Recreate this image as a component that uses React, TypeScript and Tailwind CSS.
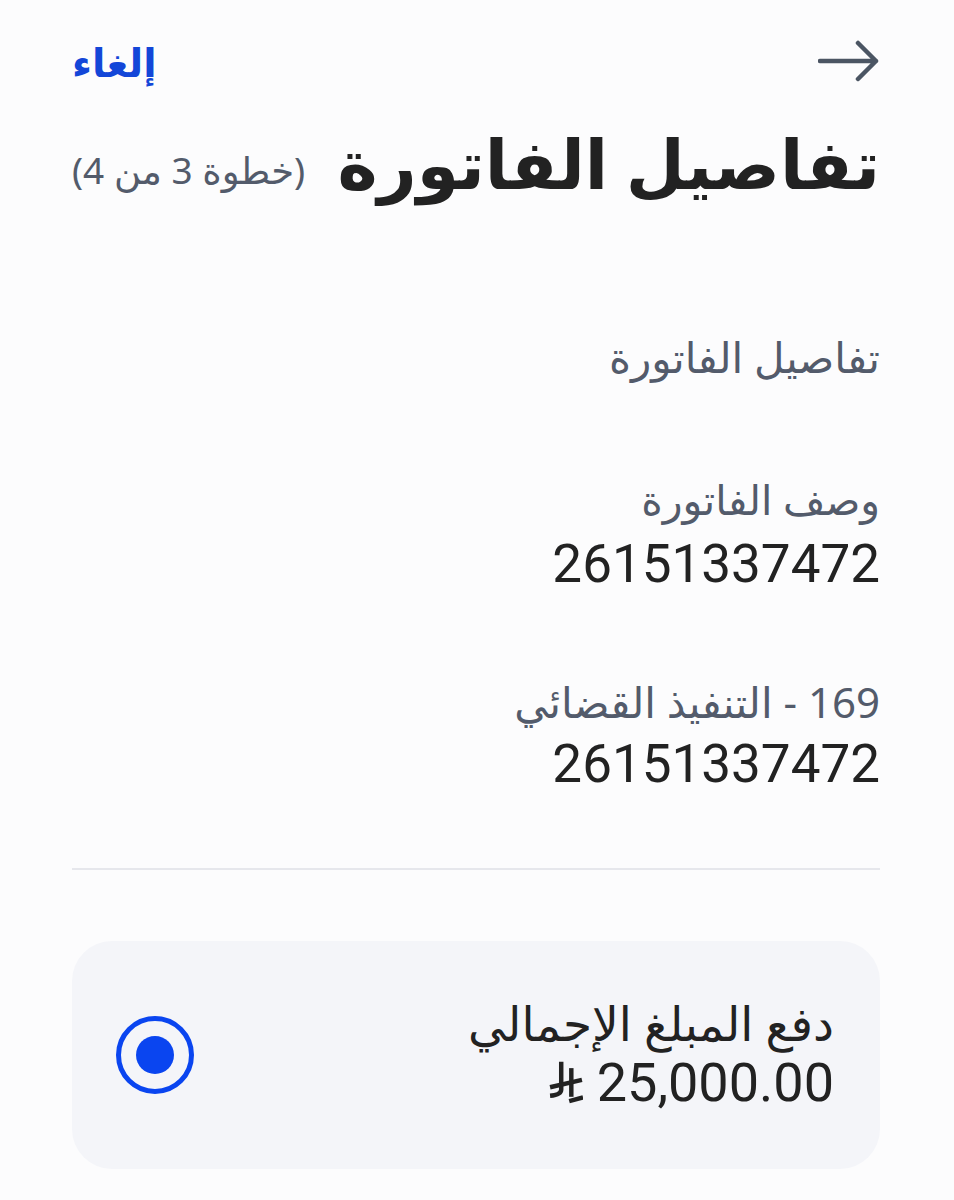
import React from "react";

function Riyal() {
  return (
    <svg width="34" height="44" viewBox="0 0 32 40" fill="none" className="shrink-0">
      <path d="M11.5 0 V26 Q11.5 31 1 32" stroke="#222" strokeWidth="4.2" />
      <path d="M21 6 V33" stroke="#222" strokeWidth="4.2" />
      <path d="M1 24 L31 17" stroke="#222" strokeWidth="4.2" />
      <path d="M19 37 L32 33.5" stroke="#222" strokeWidth="4.2" />
    </svg>
  );
}

export default function App() {
  const ar = { fontFamily: '"Noto Sans", "DejaVu Sans", sans-serif' };
  const num = { fontFamily: 'Roboto, "Noto Sans", sans-serif' };
  return (
    <div dir="rtl" className="min-h-[1200px] w-full bg-[#fcfcfd] pr-[74px] pl-[72px]" style={ar}>
      <div className="flex items-center justify-between pt-[32px] h-[90px]">
        <svg width="62" height="44" viewBox="0 0 62 44" fill="none">
          <path d="M2 22 H58 M40 4 L58 22 L40 40" stroke="#4b5563" strokeWidth="4.5" strokeLinecap="round" strokeLinejoin="round" />
        </svg>
        <span className="text-[39px] font-bold text-[#1346d8] leading-none">إلغاء</span>
      </div>
      <div className="flex items-center justify-between mt-[30px] h-[85px]">
        <h1 className="text-[68px] font-bold text-[#222] leading-[85px]">تفاصيل الفاتورة</h1>
        <span className="text-[37px] text-[#535b6b] leading-none mt-[14px]">(خطوة 3 من 4)</span>
      </div>
      <div className="mt-[126px] text-[42px] text-[#535b6b] leading-[52px]">تفاصيل الفاتورة</div>
      <div className="mt-[91px]">
        <div className="text-[41px] text-[#535b6b] leading-[50px]">وصف الفاتورة</div>
        <div className="mt-[8px] text-[53px] text-[#222] leading-[64px]" style={num}>26151337472</div>
      </div>
      <div className="mt-[81px]">
        <div className="text-[42px] text-[#535b6b] leading-[50px]">169 - التنفيذ القضائي</div>
        <div className="mt-[5px] text-[53px] text-[#222] leading-[64px]" style={num}>26151337472</div>
      </div>
      <div className="mt-[72px] h-[2px] bg-[#e6e7ec]" />
      <div className="mt-[71px] h-[228px] rounded-[40px] bg-[#f4f5f9] flex items-center justify-between pr-[46px] pl-[44px]">
        <div className="flex flex-col items-start">
          <div className="text-[47px] text-[#222] leading-[56px]">دفع المبلغ الإجمالي</div>
          <div className="flex items-center gap-[14px] text-[54px] text-[#222] leading-[64px]" style={num}>
            <span dir="ltr">25,000.00</span>
            <Riyal />
          </div>
        </div>
        <div className="w-[78px] h-[78px] rounded-full border-[5px] border-[#0a45f0] flex items-center justify-center">
          <div className="w-[38px] h-[38px] rounded-full bg-[#0a45f0]" />
        </div>
      </div>
    </div>
  );
}
